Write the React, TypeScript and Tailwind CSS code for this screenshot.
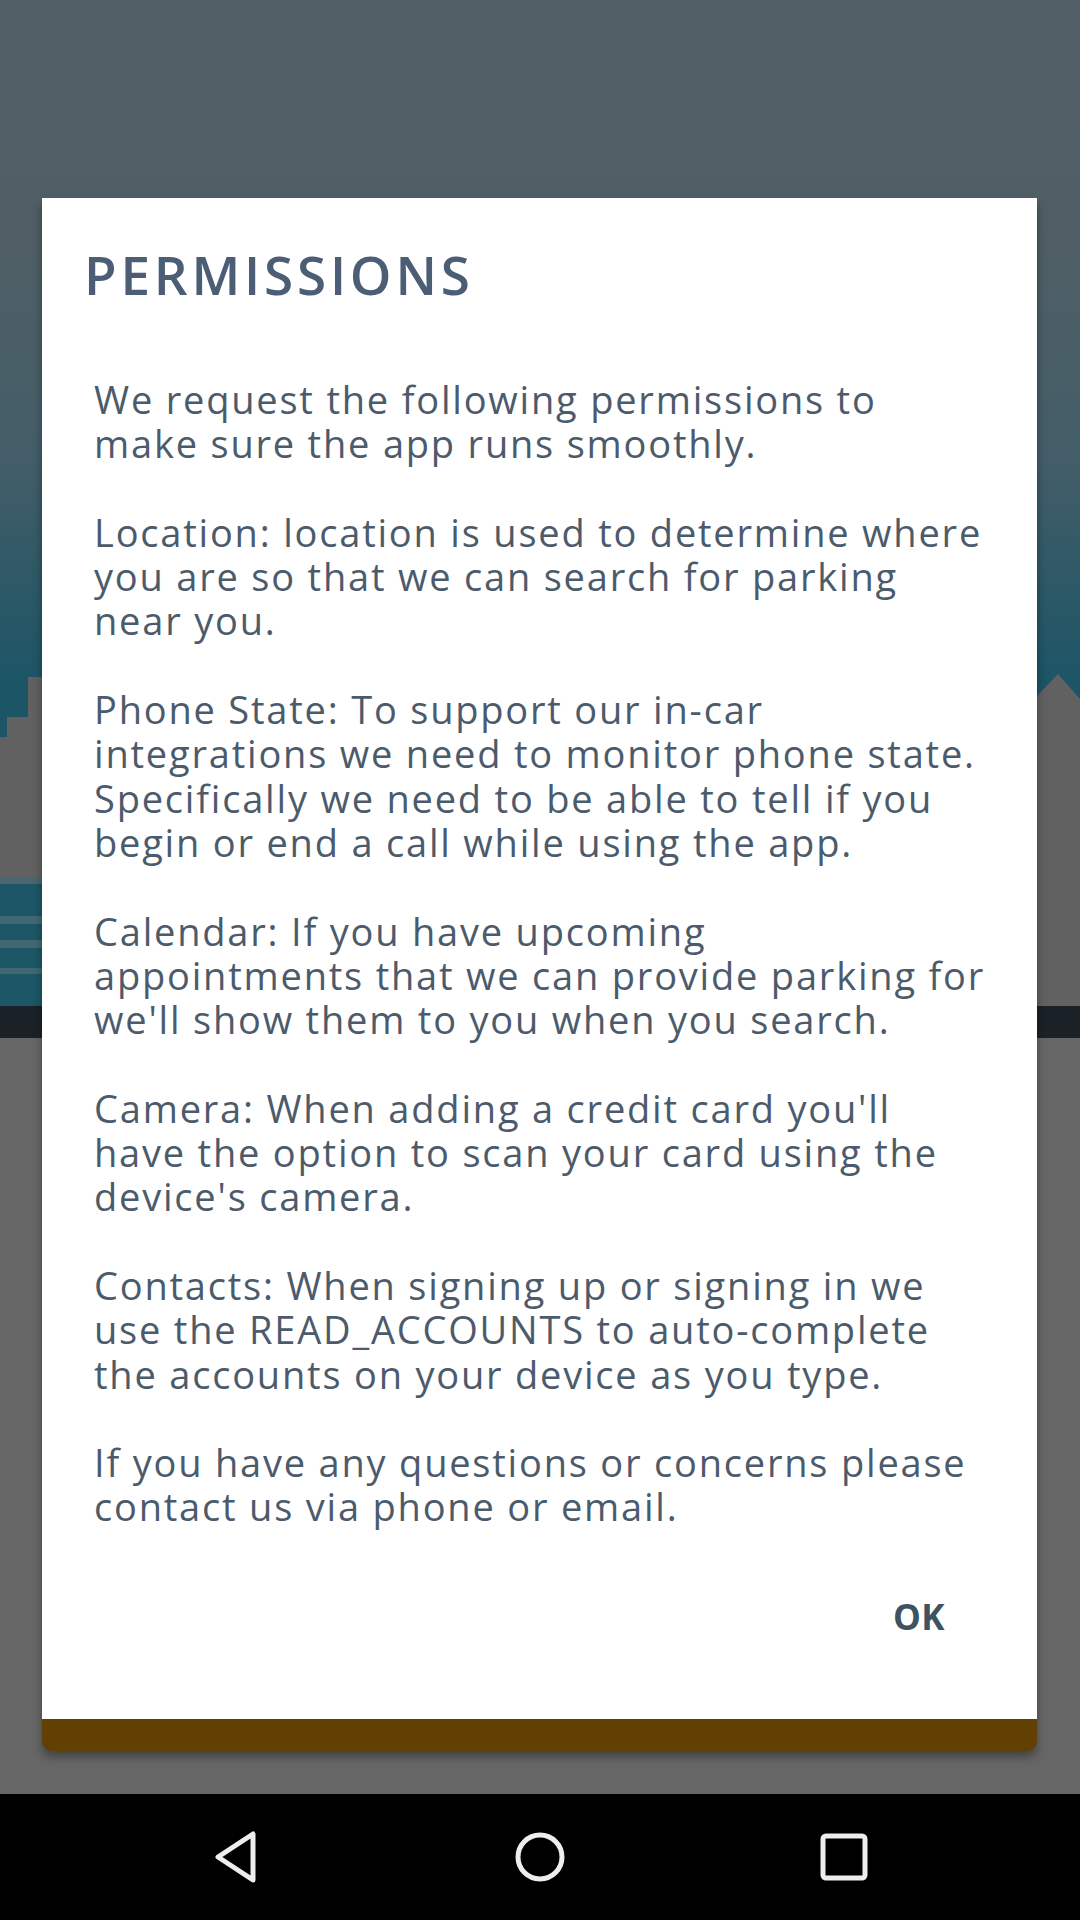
import React from 'react';

const paragraphs: string[][] = [
  ['We request the following permissions to', 'make sure the app runs smoothly.'],
  [
    'Location: location is used to determine where',
    'you are so that we can search for parking',
    'near you.',
  ],
  [
    'Phone State: To support our in-car',
    'integrations we need to monitor phone state.',
    'Specifically we need to be able to tell if you',
    'begin or end a call while using the app.',
  ],
  [
    'Calendar: If you have upcoming',
    'appointments that we can provide parking for',
    "we'll show them to you when you search.",
  ],
  [
    "Camera: When adding a credit card you'll",
    'have the option to scan your card using the',
    "device's camera.",
  ],
  [
    'Contacts: When signing up or signing in we',
    'use the READ_ACCOUNTS to auto-complete',
    'the accounts on your device as you type.',
  ],
  ['If you have any questions or concerns please', 'contact us via phone or email.'],
];

function Skyline() {
  return (
    <svg width="1080" height="360" viewBox="0 0 1080 360" className="block">
      {/* left buildings */}
      <path d="M28 31 H42 V232 H0 V91 H7 V71 H28 Z" fill="#616161" />
      <rect x="0" y="232" width="42" height="128" fill="#1d5666" />
      <rect x="0" y="232" width="42" height="6" fill="#4a6670" />
      <rect x="0" y="270" width="42" height="8" fill="#3f6873" />
      <rect x="0" y="294" width="42" height="8" fill="#3f6873" />
      <rect x="0" y="322" width="42" height="6" fill="#3f6873" />
      {/* right roof */}
      <path d="M1037 50 L1058 28 L1080 53 V360 H1037 Z" fill="#616161" />
    </svg>
  );
}

function NavBar() {
  return (
    <div className="h-[126px] bg-black flex items-center justify-center gap-[204px]">
      <div className="w-[100px] flex justify-center">
        <svg width="46" height="52" viewBox="0 0 46 52">
          <path d="M40 3 V49 L5 26 Z" fill="none" stroke="#eeeeee" strokeWidth="5" strokeLinejoin="round" />
        </svg>
      </div>
      <div className="w-[100px] flex justify-center">
        <svg width="54" height="54" viewBox="0 0 54 54">
          <circle cx="27" cy="27" r="22" fill="none" stroke="#eeeeee" strokeWidth="5" />
        </svg>
      </div>
      <div className="w-[100px] flex justify-center">
        <svg width="48" height="48" viewBox="0 0 48 48">
          <rect x="3" y="3" width="42" height="42" rx="3" fill="none" stroke="#eeeeee" strokeWidth="5" />
        </svg>
      </div>
    </div>
  );
}

export default function App() {
  return (
    <div className="relative w-[1080px] h-[1920px] overflow-hidden font-['Open_Sans',sans-serif]">
      <div className="h-[1794px] flex flex-col bg-[#666666]">
        <div className="h-[1006px] flex flex-col justify-end bg-[linear-gradient(180deg,#535f66_0%,#4f5e65_25%,#445e69_45%,#2a5866_60%,#1c5566_68%,#1d5666_100%)]">
          <Skyline />
        </div>
        <div className="h-[32px] bg-[#1b2227]" />
      </div>
      <NavBar />

      <div className="absolute left-[42px] top-[198px] w-[995px] rounded-b-[10px] bg-[#623f03] pb-[32px] shadow-[0_6px_10px_rgba(0,0,0,0.35)]">
        <div className="bg-white h-[1521px] flex flex-col">
          <h1 className="mt-[45px] ml-[42px] text-[53px] leading-[64px] font-semibold tracking-[3.8px] text-[#4b5e75]">
            PERMISSIONS
          </h1>
          <div className="mt-[70px] ml-[52px] flex flex-col gap-[44.3px] text-[38px] leading-[44.3px] tracking-[1.8px] text-[#4c5b6c]">
            {paragraphs.map((lines, i) => (
              <div key={i}>
                {lines.map((line) => (
                  <div key={line} className="whitespace-nowrap">
                    {line}
                  </div>
                ))}
              </div>
            ))}
          </div>
          <div className="flex justify-end mt-auto mb-[80px] mr-[92px]">
            <span className="text-[35px] leading-[44px] font-bold tracking-[0.5px] text-[#3e5262]">OK</span>
          </div>
        </div>
      </div>
    </div>
  );
}
